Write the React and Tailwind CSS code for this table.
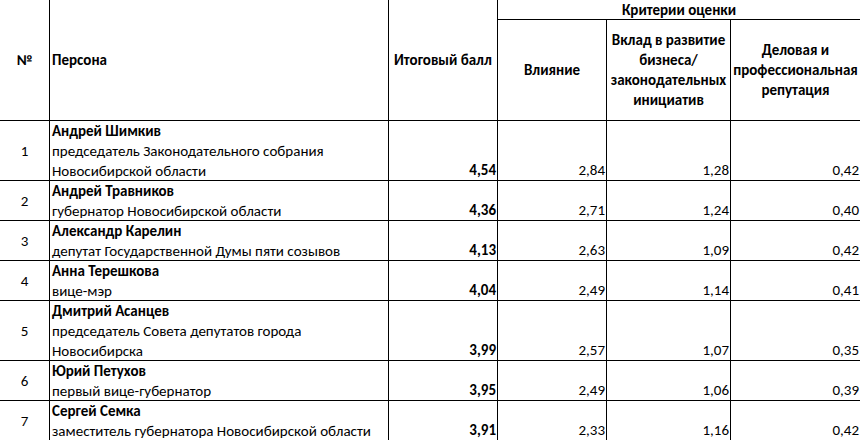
const rows = [
  { n: 1, name: "Андрей Шимкив", role: ["председатель Законодательного собрания", "Новосибирской области"], total: "4,54", a: "2,84", b: "1,28", c: "0,42", h: "h-[60px]" },
  { n: 2, name: "Андрей Травников", role: ["губернатор Новосибирской области"], total: "4,36", a: "2,71", b: "1,24", c: "0,40", h: "h-[40px]" },
  { n: 3, name: "Александр Карелин", role: ["депутат Государственной Думы пяти созывов"], total: "4,13", a: "2,63", b: "1,09", c: "0,42", h: "h-[40px]" },
  { n: 4, name: "Анна Терешкова", role: ["вице-мэр"], total: "4,04", a: "2,49", b: "1,14", c: "0,41", h: "h-[40px]" },
  { n: 5, name: "Дмитрий Асанцев", role: ["председатель Совета депутатов города", "Новосибирска"], total: "3,99", a: "2,57", b: "1,07", c: "0,35", h: "h-[60px]" },
  { n: 6, name: "Юрий Петухов", role: ["первый вице-губернатор"], total: "3,95", a: "2,49", b: "1,06", c: "0,39", h: "h-[40px]" },
  { n: 7, name: "Сергей Семка", role: ["заместитель губернатора Новосибирской области"], total: "3,91", a: "2,33", b: "1,16", c: "0,42", h: "h-[40px]" },
];

const cell = "border-r border-b border-black overflow-hidden";

export default function App() {
  return (
    <div
      className="w-[860px] h-[440px] overflow-hidden bg-white text-black text-[15px] leading-[20px]"
      style={{ fontFamily: "Carlito, Lato, 'Liberation Sans', sans-serif" }}
    >
      <div className="grid w-[861px] grid-cols-[50px_339px_109px_109px_124px_130px] grid-rows-[20px_101px]">
        {/* header */}
        <div className={`${cell} row-span-2 flex items-center justify-center font-bold`}>№</div>
        <div className={`${cell} row-span-2 flex items-center pl-[2px] font-bold`}>Персона</div>
        <div className={`${cell} row-span-2 flex items-center justify-center font-bold`}>Итоговый балл</div>
        <div className={`${cell} col-span-3 flex items-center justify-center font-bold`}>Критерии оценки</div>
        <div className={`${cell} flex items-center justify-center text-center font-bold`}>Влияние</div>
        <div className={`${cell} flex items-center justify-center text-center font-bold`}>
          <div>
            Вклад в развитие
            <br />
            бизнеса/
            <br />
            законодательных
            <br />
            инициатив
          </div>
        </div>
        <div className={`${cell} flex items-center justify-center text-center font-bold whitespace-nowrap`}>
          <div>
            Деловая и
            <br />
            профессиональная
            <br />
            репутация
          </div>
        </div>
      </div>

      {rows.map((r) => (
        <div key={r.n} className={`grid w-[861px] grid-cols-[50px_339px_109px_109px_124px_130px] ${r.h}`}>
          <div className={`${cell} flex items-center justify-center`}>{r.n}</div>
          <div className={`${cell} pl-[2px] whitespace-nowrap`}>
            <div className="font-bold">{r.name}</div>
            {r.role.map((line) => (
              <div key={line}>{line}</div>
            ))}
          </div>
          <div className={`${cell} flex items-end justify-end pr-[1px] font-bold`}>{r.total}</div>
          <div className={`${cell} flex items-end justify-end pr-[1px]`}>{r.a}</div>
          <div className={`${cell} flex items-end justify-end pr-[1px]`}>{r.b}</div>
          <div className={`${cell} flex items-end justify-end pr-[1px]`}>{r.c}</div>
        </div>
      ))}
    </div>
  );
}
